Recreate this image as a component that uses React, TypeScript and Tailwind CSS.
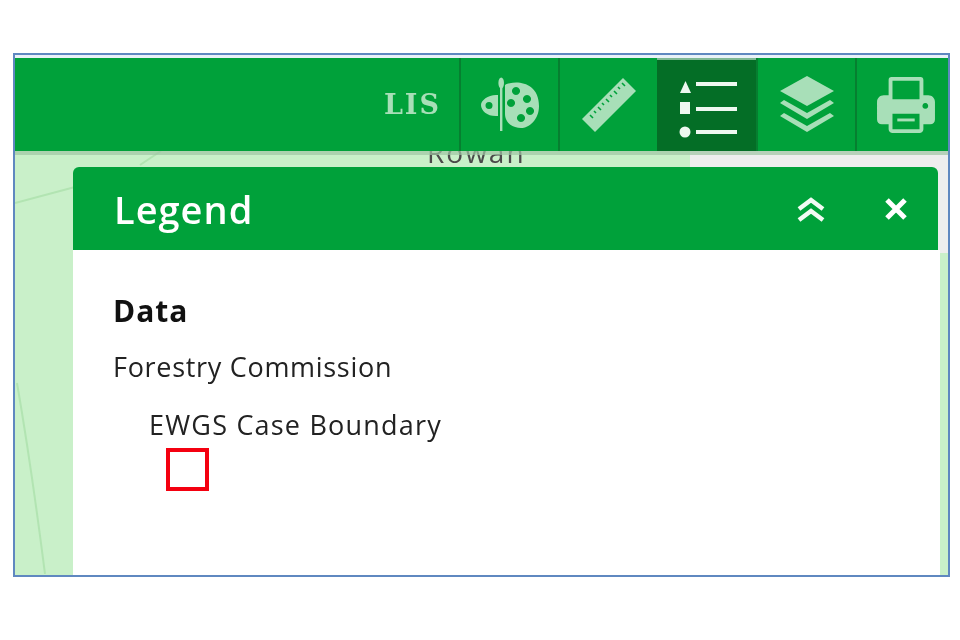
const soft = "#a8dfb8";

function Palette() {
  return (
    <svg width="62" height="58" viewBox="0 0 62 58" fill={soft}>
      <path fillRule="evenodd" d="M26 9C34 4 60 4 60 30C60 44 50 52 42 52C34 52 26 47 26 38Z M37 11a4 4 0 1 0 .01 0Z M48 19a4 4 0 1 0 .01 0Z M51 31a4 4 0 1 0 .01 0Z M42 38a4 4 0 1 0 .01 0Z M32 23a4 4 0 1 0 .01 0Z" />
      <path fillRule="evenodd" d="M19 19L19 40C9 41 2 35 2 29C2 24 10 18 19 19Z M10 26a3.5 3.5 0 1 0 .01 7a3.5 3.5 0 0 0 0-7Z" />
      <rect x="21" y="10" width="2.4" height="45" />
      <ellipse cx="22.2" cy="7" rx="2.8" ry="5.5" />
    </svg>
  );
}
function Ruler() {
  return (
    <svg width="58" height="58" viewBox="0 0 58 58">
      <path d="M43 2L56 15L15 56L2 43Z" fill={soft} />
      <path d="M42 7L45 10M38 11L40 13M34 15L37 18M30 19L32 21M26 23L29 26M22 27L24 29M18 31L21 34M14 35L16 37M10 39L13 42" stroke="#00a13a" strokeWidth="1.6" />
    </svg>
  );
}
function ListIcon() {
  return (
    <svg className="overflow-visible" width="60" height="60" viewBox="0 0 60 60" fill="#eef8f0">
      <path d="M8.5 5L14 17H3Z" />
      <rect x="3" y="26" width="10" height="12" />
      <circle cx="8" cy="56" r="5.5" />
      <rect x="19" y="6" width="41" height="4" />
      <rect x="19" y="31" width="41" height="4" />
      <rect x="19" y="54" width="41" height="4" />
    </svg>
  );
}
function Layers() {
  return (
    <svg width="58" height="58" viewBox="0 0 58 58" fill={soft}>
      <path d="M29 0L56 15L29 30L2 15Z" />
      <path d="M6 24L29 37L52 24L56 27L29 43L2 27Z" />
      <path d="M6 37L29 50L52 37L56 40L29 56L2 40Z" />
    </svg>
  );
}
function Printer() {
  return (
    <svg width="58" height="56" viewBox="0 0 60 58" fill="none">
      <path
        fillRule="evenodd"
        fill={soft}
        d="M12 3C12 1 13 0 15 0H45C47 0 48 1 48 3V19H53C57 19 60 22 60 26V44C60 47 58 49 55 49H48V54C48 56 46 58 44 58H16C14 58 12 56 12 54V49H5C2 49 0 47 0 44V26C0 22 3 19 7 19H12Z M16 4V23H44V4Z M16 38V54H44V38Z M50 27a3 3 0 1 0 .01 0Z"
      />
      <rect x="21" y="43" width="18" height="3" fill={soft} />
    </svg>
  );
}

function ToolCell({ active, children }: { active?: boolean; children: React.ReactNode }) {
  return (
    <div
      className={
        active
          ? "flex w-[99px] items-center justify-center border-t-2 border-[#7fb894] bg-[#046e26]"
          : "flex w-[99px] items-center justify-center border-l-2 border-[#067f30]"
      }
    >
      {children}
    </div>
  );
}

export default function App() {
  return (
    <div className="h-[640px] w-[960px] overflow-hidden bg-white pl-[13px] pt-[53px] font-['Open_Sans','Lato',sans-serif] blur-[0.7px]">
      <div className="flex h-[524px] w-[937px] flex-col border-2 border-[#5f88c0] bg-[#e8f1f8] pt-[3px]">
        <div className="flex h-[93px] shrink-0 justify-end bg-[#00a13a]">
          <div className="flex items-center pr-[18px] pt-[2px] font-['DejaVu_Serif',serif] text-[27px] font-bold tracking-[2px] text-[#a8dfb8]">
            LIS
          </div>
          <ToolCell><Palette /></ToolCell>
          <ToolCell><Ruler /></ToolCell>
          <ToolCell active><ListIcon /></ToolCell>
          <ToolCell><Layers /></ToolCell>
          <div className="flex w-[93px] items-center justify-center border-l-2 border-[#067f30] pl-[6px]">
            <Printer />
          </div>
        </div>

        <div className="relative flex min-h-0 flex-1 flex-col overflow-hidden bg-[#c9f0c9] pl-[58px] pr-[8px] pt-[16px]">
          <svg className="absolute left-0 top-0" width="160" height="423" viewBox="0 0 160 423" fill="none">
            <path d="M0 52L60 36" stroke="#b2e4b2" strokeWidth="2" />
            <path d="M125 14L146 0" stroke="#b2e4b2" strokeWidth="2" />
            <path d="M2 232C12 290 22 360 30 423" stroke="#b2e4b2" strokeWidth="2" />
          </svg>
          <div className="absolute left-[675px] right-0 top-0 h-[102px] bg-[#eeeeee]" />
          <div className="absolute left-[412px] top-[-14px] text-[28px] leading-[30px] tracking-[2px] text-[#4a4a4a]">
            Rowan
          </div>
          <div className="absolute inset-x-0 top-0 h-[4px] bg-[#9fc4a4] opacity-70" />

          <div className="relative flex min-h-0 flex-1 flex-col">
            <div className="mr-[2px] flex h-[83px] shrink-0 items-center justify-between rounded-t-[6px] bg-[#00a13a] pl-[41px] pr-[30px]">
              <span className="text-[38px] font-semibold leading-none tracking-[1px] text-white">Legend</span>
              <div className="flex items-center gap-[58px]">
                <svg width="30" height="26" viewBox="0 0 30 26" fill="none" stroke="#f2fbf4" strokeWidth="4.5">
                  <path d="M3 13L15 4L27 13" />
                  <path d="M3 24L15 15L27 24" />
                </svg>
                <svg width="24" height="24" viewBox="0 0 24 24" fill="none" stroke="#ffffff" strokeWidth="5">
                  <path d="M3 3L21 21M21 3L3 21" />
                </svg>
              </div>
            </div>
            <div className="flex flex-1 flex-col bg-white pl-[40px] pt-[42px] text-[#222222]">
              <div className="text-[30px] font-bold leading-[38px] tracking-[1px] text-[#111111]">Data</div>
              <div className="mt-[19px] text-[27px] leading-[36px] tracking-[0.7px]">Forestry Commission</div>
              <div className="mt-[22px] pl-[36px] text-[27px] leading-[36px] tracking-[1.2px]">EWGS Case Boundary</div>
              <div className="ml-[53px] mt-[5px] h-[43px] w-[43px] border-[4px] border-[#f40010]" />
            </div>
          </div>
        </div>
      </div>
    </div>
  );
}
